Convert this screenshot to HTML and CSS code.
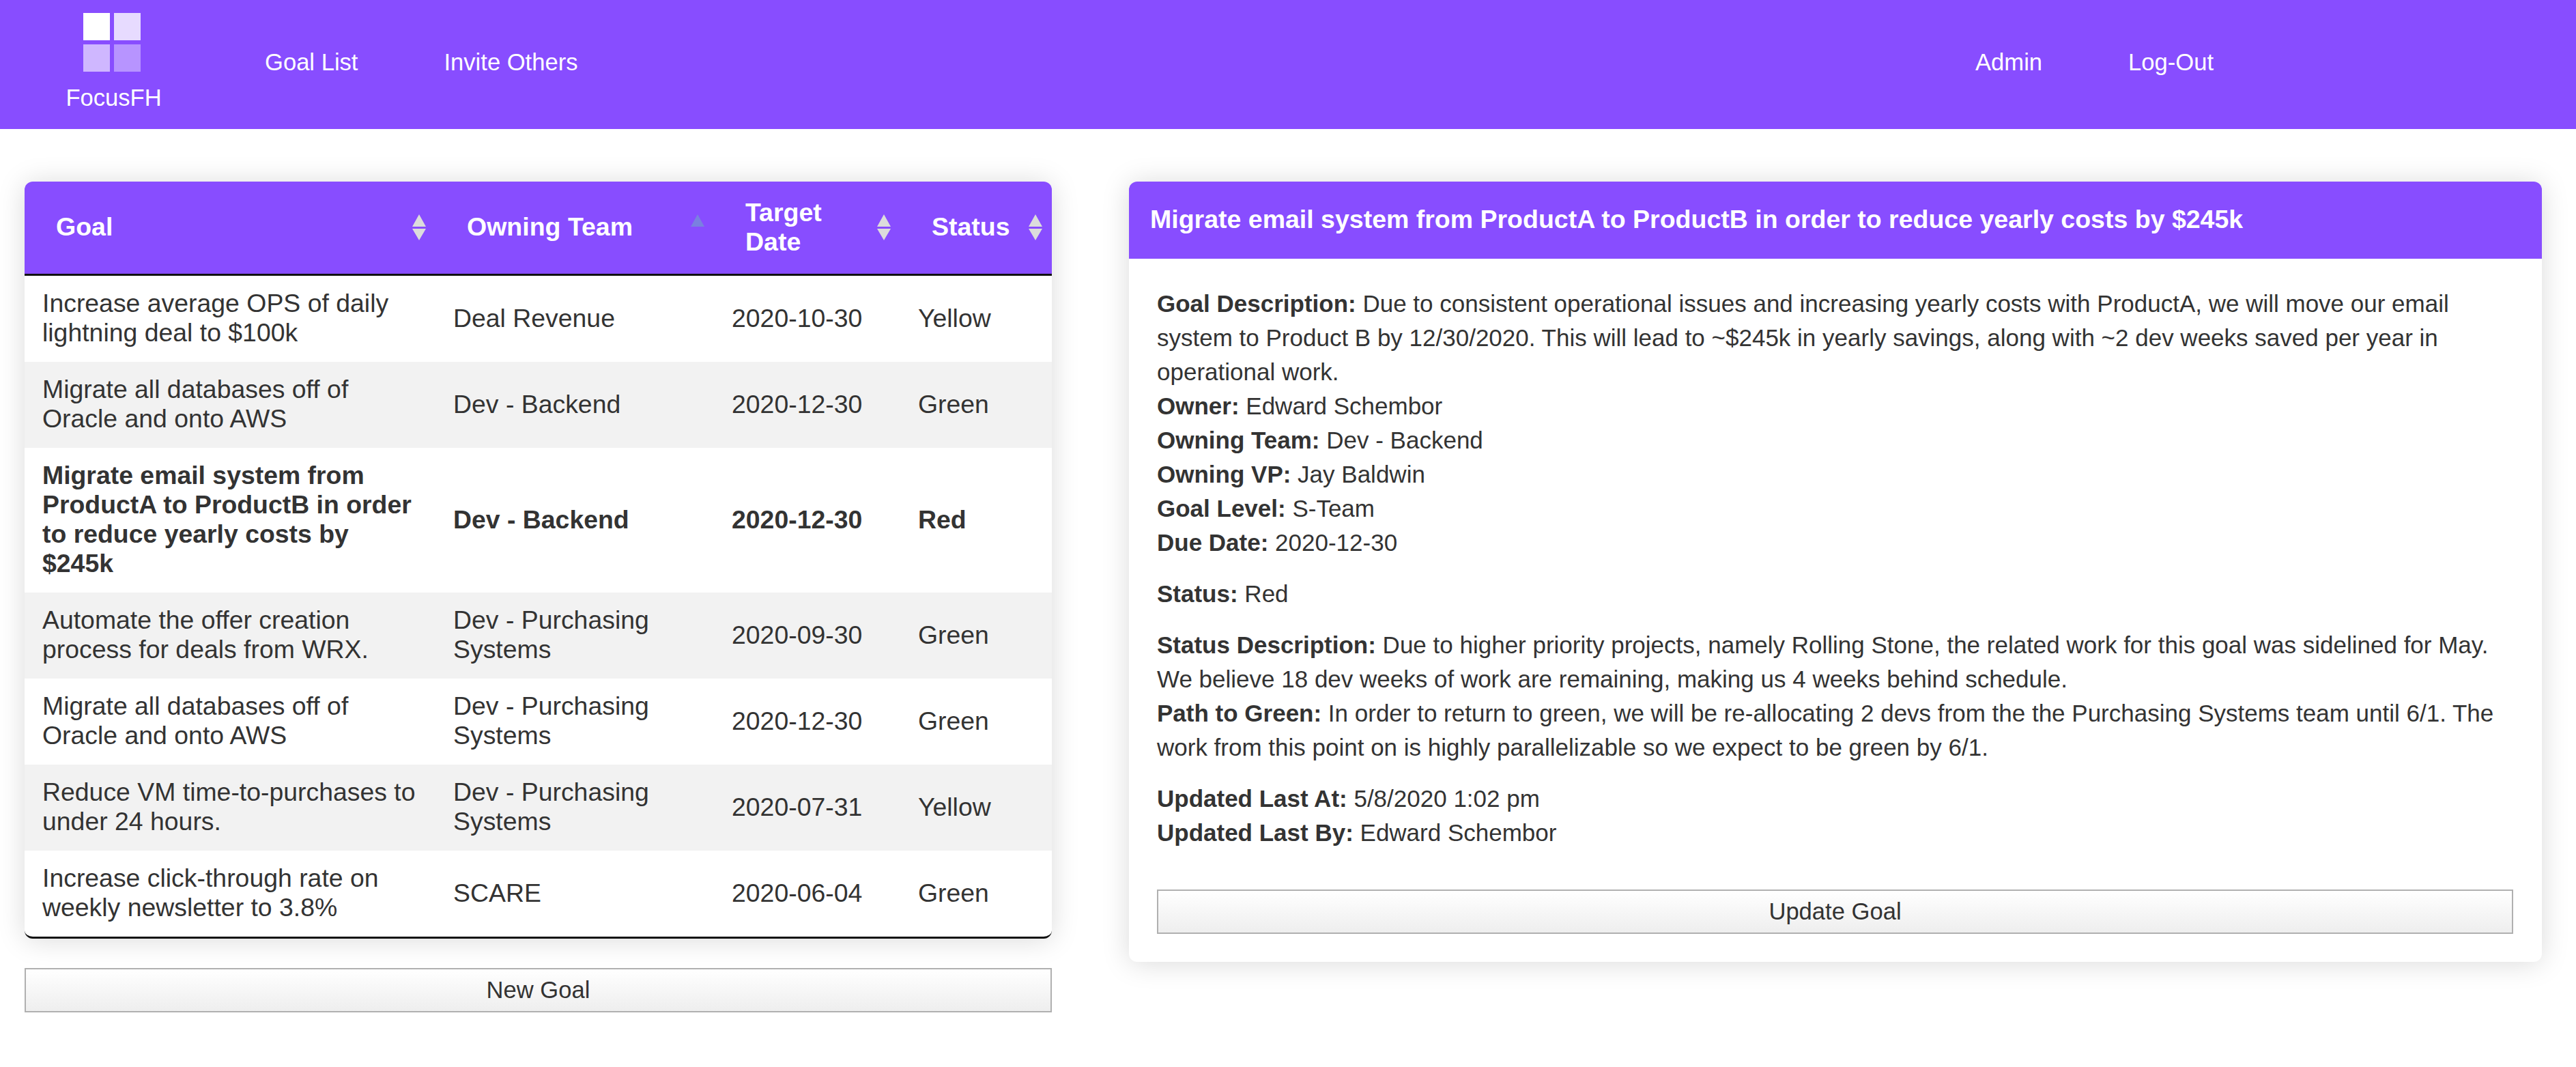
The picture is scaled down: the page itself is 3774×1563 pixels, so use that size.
FILE: index.html
```html
<!DOCTYPE html>
<html lang="en">
<head>
<meta charset="utf-8">
<title>FocusFH</title>
<link rel="stylesheet" href="styles.css">
</head>
<body>
<header class="topbar">
  <a class="brand" href="#">
    <svg class="brand-logo" viewBox="0 0 84 86" width="84" height="86" aria-hidden="true">
      <rect x="0" y="0" width="39" height="40" fill="#fff"/>
      <rect x="45" y="0" width="39" height="40" fill="#fff" fill-opacity=".8"/>
      <rect x="0" y="46" width="39" height="40" fill="#fff" fill-opacity=".6"/>
      <rect x="45" y="46" width="39" height="40" fill="#fff" fill-opacity=".4"/>
    </svg>
    <span class="brand-name">FocusFH</span>
  </a>
  <nav class="nav nav-main">
    <a href="#">Goal List</a>
    <a href="#">Invite Others</a>
  </nav>
  <nav class="nav nav-user">
    <a href="#">Admin</a>
    <a href="#">Log-Out</a>
  </nav>
</header>
<main class="layout">
  <section class="left">
    <div class="table-card">
      <table class="goals">
        <colgroup>
          <col class="col-goal"><col class="col-team"><col class="col-date"><col class="col-status">
        </colgroup>
        <thead>
          <tr>
            <th><div class="th-inner"><span>Goal</span><svg class="sort" viewBox="0 0 20 38" width="20" height="38" aria-hidden="true"><path class="sort-both" d="M10 0l10 18H0zM10 38L0 21h20z"/></svg></div></th>
            <th><div class="th-inner"><span>Owning Team</span><svg class="sort" viewBox="0 0 20 38" width="20" height="38" aria-hidden="true"><path class="sort-asc" d="M10 0l10 18H0z"/></svg></div></th>
            <th><div class="th-inner"><span>Target<br>Date</span><svg class="sort" viewBox="0 0 20 38" width="20" height="38" aria-hidden="true"><path class="sort-both" d="M10 0l10 18H0zM10 38L0 21h20z"/></svg></div></th>
            <th><div class="th-inner"><span>Status</span><svg class="sort" viewBox="0 0 20 38" width="20" height="38" aria-hidden="true"><path class="sort-both" d="M10 0l10 18H0zM10 38L0 21h20z"/></svg></div></th>
          </tr>
        </thead>
        <tbody>
          <tr><td>Increase average OPS of daily lightning deal to $100k</td><td>Deal Revenue</td><td>2020-10-30</td><td>Yellow</td></tr>
          <tr><td>Migrate all databases off of Oracle and onto AWS</td><td>Dev - Backend</td><td>2020-12-30</td><td>Green</td></tr>
          <tr class="selected"><td>Migrate email system from ProductA to ProductB in order to reduce yearly costs by $245k</td><td>Dev - Backend</td><td>2020-12-30</td><td>Red</td></tr>
          <tr><td>Automate the offer creation process for deals from WRX.</td><td>Dev - Purchasing Systems</td><td>2020-09-30</td><td>Green</td></tr>
          <tr><td>Migrate all databases off of Oracle and onto AWS</td><td>Dev - Purchasing Systems</td><td>2020-12-30</td><td>Green</td></tr>
          <tr><td>Reduce VM time-to-purchases to under 24 hours.</td><td>Dev - Purchasing Systems</td><td>2020-07-31</td><td>Yellow</td></tr>
          <tr><td>Increase click-through rate on weekly newsletter to 3.8%</td><td>SCARE</td><td>2020-06-04</td><td>Green</td></tr>
        </tbody>
      </table>
    </div>
    <button class="btn btn-new" type="button">New Goal</button>
  </section>
  <section class="detail-card">
    <h2 class="detail-title">Migrate email system from ProductA to ProductB in order to reduce yearly costs by $245k</h2>
    <div class="detail-body">
      <p><b>Goal Description:</b> Due to consistent operational issues and increasing yearly costs with ProductA, we will move our email system to Product B by 12/30/2020. This will lead to ~$245k in yearly savings, along with ~2 dev weeks saved per year in operational work.<br>
      <b>Owner:</b> Edward Schembor<br>
      <b>Owning Team:</b> Dev - Backend<br>
      <b>Owning VP:</b> Jay Baldwin<br>
      <b>Goal Level:</b> S-Team<br>
      <b>Due Date:</b> 2020-12-30</p>
      <p><b>Status:</b> Red</p>
      <p><b>Status Description:</b> Due to higher priority projects, namely Rolling Stone, the related work for this goal was sidelined for May. We believe 18 dev weeks of work are remaining, making us 4 weeks behind schedule.<br>
      <b>Path to Green:</b> In order to return to green, we will be re-allocating 2 devs from the the Purchasing Systems team until 6/1. The work from this point on is highly parallelizable so we expect to be green by 6/1.</p>
      <p><b>Updated Last At:</b> 5/8/2020 1:02 pm<br>
      <b>Updated Last By:</b> Edward Schembor</p>
      <button class="btn btn-update" type="button">Update Goal</button>
    </div>
  </section>
</main>
</body>
</html>
```

FILE: styles.css
```css
* { box-sizing: border-box; }
html, body { margin: 0; padding: 0; background: #fff; }
body {
  font-family: "Liberation Sans", Arial, sans-serif;
  font-size: 35px;
  color: #333;
}
a { color: inherit; text-decoration: none; }

.topbar {
  display: flex;
  align-items: flex-start;
  height: 189px;
  background: #884dff;
  color: #fff;
  font-size: 34.6px;
  padding-left: 98px;
}
.brand {
  display: flex;
  flex-direction: column;
  align-items: center;
  width: 137px;
  padding-top: 19px;
}
.brand-logo { display: block; flex: none; margin-right: 5px; }
.brand-name { margin-top: 18px; line-height: 40px; white-space: nowrap; }
.nav { display: flex; gap: 126px; padding-top: 71px; line-height: 40px; }
.nav-main { margin-left: 153px; }
.nav-user { margin-left: auto; margin-right: 531px; }

.layout {
  display: grid;
  grid-template-columns: 1505px 2070px;
  column-gap: 113px;
  align-items: start;
  padding: 77px 50px 0 36px;
}

.table-card {
  border-radius: 12px;
  overflow: hidden;
  border-bottom: 3px solid #111;
  box-shadow: 0 2px 40px rgba(0, 0, 0, .15);
  background: #fff;
}
.goals { width: 100%; border-collapse: separate; border-spacing: 0; table-layout: fixed; }
.col-goal { width: 602px; }
.col-team { width: 408px; }
.col-date { width: 273px; }
.col-status { width: 222px; }
.goals th {
  height: 138px;
  padding: 0 14px 2px 46px;
  background: #884dff;
  color: #fff;
  text-align: left;
  font-size: 37.5px;
  line-height: 43px;
  border-bottom: 3px solid #111;
}
.th-inner { display: flex; align-items: center; justify-content: space-between; }
.sort { display: block; flex: none; }
.sort-both { fill: #dcdcdc; }
.sort-asc { fill: #7a80e0; }
.goals td { padding: 19px 22px 21px 26px; line-height: 43px; font-size: 37.4px; }
.goals tbody tr:nth-child(even) td { background: #f2f2f2; }
.goals .selected td { font-weight: bold; }

.btn {
  display: block;
  width: 100%;
  height: 65px;
  padding: 0;
  font: inherit;
  font-size: 34.6px;
  color: #333;
  border: 2px solid #b0b0b0;
  border-radius: 0;
  background: linear-gradient(#fff, #eee);
}
.btn-new { margin-top: 43px; }
.btn-update { margin-top: 58px; }

.detail-card {
  border-radius: 12px;
  overflow: hidden;
  background: #fff;
  box-shadow: 0 2px 40px rgba(0, 0, 0, .15);
}
.detail-title {
  margin: 0;
  padding: 0 31px 3px;
  height: 113px;
  display: flex;
  align-items: center;
  background: #884dff;
  color: #fff;
  font-size: 37.5px;
}
.detail-body { padding: 41px 42px 41px 41px; }
.detail-body p { margin: 0 0 25px; line-height: 50px; }
```
